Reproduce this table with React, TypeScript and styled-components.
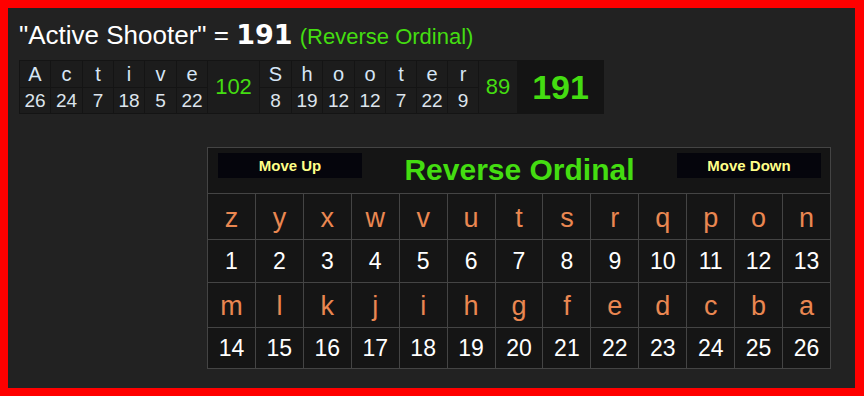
import React from "react";
import styled, { createGlobalStyle } from "styled-components";

const GlobalStyle = createGlobalStyle`
  html, body {
    margin: 0;
    padding: 0;
    background: #222;
  }
  body {
    font-family: "Liberation Sans", Arial, sans-serif;
  }
`;

const Frame = styled.div`
  box-sizing: border-box;
  width: 864px;
  height: 396px;
  border: 8px solid #ff0000;
  border-right-width: 9px;
  background: #222;
  padding: 11px 11px 0;
  overflow: hidden;
`;

const Title = styled.div`
  height: 30px;
  font-size: 26px;
  line-height: 30px;
  color: #fff;
  white-space: nowrap;
  padding-top: 1px;
`;

const TitleTotal = styled.span`
  font-family: "DejaVu Sans", Verdana, sans-serif;
  font-weight: bold;
  font-size: 27px;
  line-height: 0;
`;

const TitleCipher = styled.span`
  font-size: 22px;
  color: #44dd11;
`;

const Breakdown = styled.table`
  margin-top: 10px;
  border-collapse: collapse;
  border: 1px solid #141414;
`;

const BCell = styled.td<{ $w: number }>`
  width: ${(p) => p.$w}px;
  min-width: ${(p) => p.$w}px;
  max-width: ${(p) => p.$w}px;
  box-sizing: border-box;
  padding: 0;
  line-height: 1;
  text-align: center;
  background: #1c1c1c;
  border: 1px solid #141414;
`;

const BLetter = styled(BCell)`
  height: 27px;
  font-size: 20px;
  color: #d6e6f6;
  vertical-align: middle;
`;

const BNumber = styled(BCell)`
  height: 26px;
  font-size: 19px;
  color: #dde4ec;
  vertical-align: middle;
`;

const BSum = styled(BCell)`
  font-size: 22px;
  color: #44dd11;
  vertical-align: middle;
`;

const BTotal = styled(BCell)`
  font-size: 34px;
  font-weight: bold;
  color: #44dd11;
  background: #141414;
  vertical-align: middle;
`;

const Chart = styled.div`
  box-sizing: border-box;
  width: 624px;
  margin: 33px 0 0 188px;
  display: grid;
  grid-template-columns: repeat(13, 1fr);
  grid-template-rows: 45px 45px 42px 44px 40px;
  gap: 1px;
  padding: 1px;
  background: #444;
`;

const ChartHeader = styled.div`
  grid-column: 1 / -1;
  background: #151515;
  display: flex;
  align-items: flex-start;
  justify-content: space-between;
  padding: 5px 9px 0 10px;
`;

const MoveButton = styled.div`
  width: 144px;
  height: 25px;
  background: #05050c;
  color: #ffff88;
  font-weight: bold;
  font-size: 15px;
  display: flex;
  align-items: center;
  justify-content: center;
`;

const ChartTitle = styled.div`
  font-size: 30px;
  line-height: 33px;
  font-weight: bold;
  color: #44dd11;
`;

const Cell = styled.div<{ $letter?: boolean }>`
  background: #151515;
  display: flex;
  align-items: center;
  justify-content: center;
  padding-top: ${(p) => (p.$letter ? "3px" : "0")};
  font-size: ${(p) => (p.$letter ? "27px" : "23px")};
  color: ${(p) => (p.$letter ? "#ea8751" : "#ffffff")};
`;

const words = [
  { letters: "Active", sum: 102, width: 52 },
  { letters: "Shooter", sum: 89, width: 39 },
];

const widths = [
  [31, 32, 31, 31, 32, 31],
  [32, 31, 32, 31, 31, 31, 31],
];

const value = (ch: string) => 27 - (ch.toLowerCase().charCodeAt(0) - 96);

const alphabet = "abcdefghijklmnopqrstuvwxyz".split("").reverse();

export default function App() {
  const rows = [alphabet.slice(0, 13), alphabet.slice(13)];
  return (
    <>
      <GlobalStyle />
      <Frame>
        <Title>
          "Active Shooter" = <TitleTotal>191</TitleTotal>{" "}
          <TitleCipher>(Reverse Ordinal)</TitleCipher>
        </Title>
        <Breakdown>
          <tbody>
            <tr>
              {words.map((w, wi) => (
                <React.Fragment key={w.letters}>
                  {w.letters.split("").map((ch, i) => (
                    <BLetter key={i} $w={widths[wi][i]}>
                      {ch}
                    </BLetter>
                  ))}
                  <BSum rowSpan={2} $w={w.width}>
                    {w.sum}
                  </BSum>
                </React.Fragment>
              ))}
              <BTotal rowSpan={2} $w={86}>
                191
              </BTotal>
            </tr>
            <tr>
              {words.map((w, wi) =>
                w.letters.split("").map((ch, i) => (
                  <BNumber key={`${wi}-${i}`} $w={widths[wi][i]}>
                    {value(ch)}
                  </BNumber>
                ))
              )}
            </tr>
          </tbody>
        </Breakdown>
        <Chart>
          <ChartHeader>
            <MoveButton>Move Up</MoveButton>
            <ChartTitle>Reverse Ordinal</ChartTitle>
            <MoveButton>Move Down</MoveButton>
          </ChartHeader>
          {rows.map((row, ri) => (
            <React.Fragment key={ri}>
              {row.map((ch) => (
                <Cell key={ch} $letter>
                  {ch}
                </Cell>
              ))}
              {row.map((ch) => (
                <Cell key={`n-${ch}`}>{value(ch)}</Cell>
              ))}
            </React.Fragment>
          ))}
        </Chart>
      </Frame>
    </>
  );
}
